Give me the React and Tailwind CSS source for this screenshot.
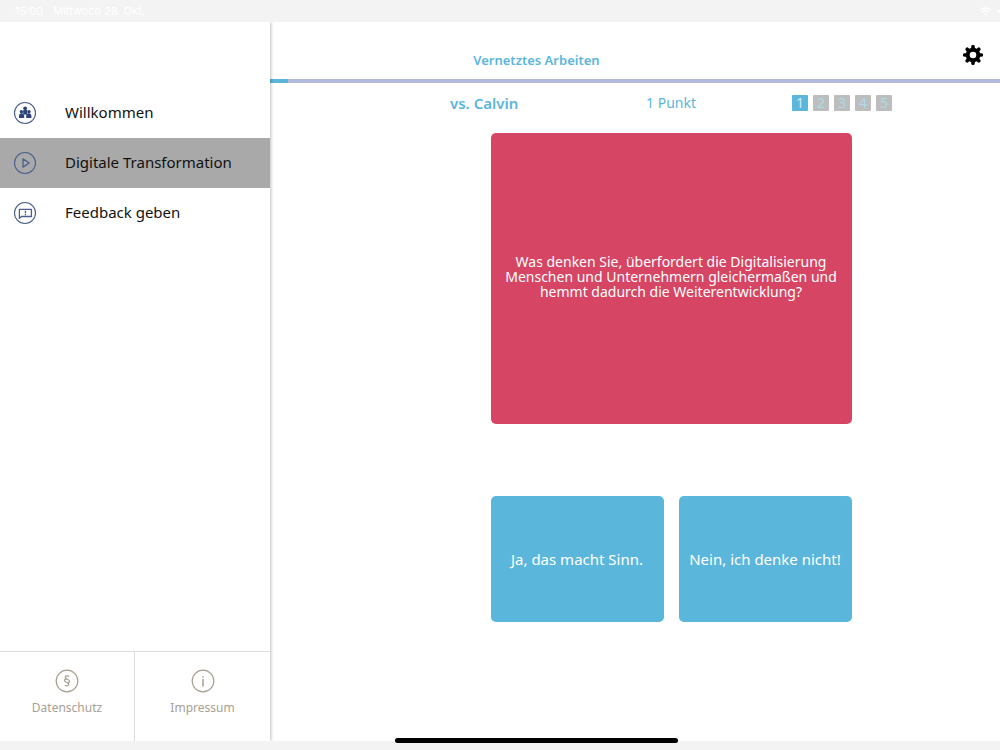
import { clsx } from 'clsx';

const WelcomeIcon = () => (
  <svg viewBox="0 0 24 24" className="h-6 w-6" fill="#2c4478" aria-hidden="true">
    <circle cx="12" cy="12" r="10.5" fill="none" stroke="#4a5f8e" strokeWidth="1.1" />
    <circle cx="12.200" cy="7.300" r="1.9" />
    <circle cx="8.400" cy="10.700" r="1.7" />
    <circle cx="16" cy="10.700" r="1.7" />
    <path d="M10.200 9h4v4.600h-4z" />
    <path d="M6 17v-2.200c0-3.400 5.200-3.400 5.200 0V17zM13.200 17v-2.200c0-3.400 5.200-3.400 5.200 0V17z" />
  </svg>
);

const PlayIcon = () => (
  <svg viewBox="0 0 24 24" className="h-6 w-6" fill="none" stroke="#4a5f8e" strokeWidth="1.1" aria-hidden="true">
    <circle cx="12" cy="12" r="10.5" />
    <path d="M10 7.900v8.200l6.200-4.100z" strokeWidth="1.300" strokeLinejoin="round" />
  </svg>
);

const FeedbackIcon = () => (
  <svg viewBox="0 0 24 24" className="h-6 w-6" fill="none" stroke="#4a5f8e" strokeWidth="1.1" aria-hidden="true">
    <circle cx="12" cy="12" r="10.5" />
    <path d="M6.400 8.300h12v7.200H8.600l-2.200 1.800z" strokeWidth="1.300" strokeLinejoin="round" />
    <path d="M12.400 9.700v2.600M12.400 13.100v1.100" strokeWidth="1.300" />
  </svg>
);

const InfoIcon = () => (
  <svg viewBox="0 0 24 24" className="h-6 w-6" fill="none" stroke="#a89f92" strokeWidth="1.2" aria-hidden="true">
    <circle cx="12" cy="12" r="10.8" />
    <path d="M12 10v7.500M12 7v1.500" strokeWidth="1.500" />
  </svg>
);

const PrivacyIcon = () => (
  <svg viewBox="0 0 24 24" className="h-6 w-6" fill="none" stroke="#a89f92" strokeWidth="1.2" aria-hidden="true">
    <circle cx="12" cy="12" r="10.8" />
    <path d="M14.200 7.500c-1.200-.9-4-.8-4 .8 0 1.800 4.300 2 4.300 3.900 0 1.200-1.200 1.700-2.300 1.700" />
    <path d="M12 9.800c-1.200 0-2.500.5-2.500 1.700 0 1.900 4.400 2.100 4.400 3.900 0 1.700-2.800 1.700-4.100.8" />
  </svg>
);

const GearIcon = () => (
  <svg viewBox="0 0 20 20" className="h-5 w-5" fill="none" stroke="#000" aria-hidden="true">
    <circle cx="10" cy="10" r="5.300" strokeWidth="4" />
    <path
      d="M10 1.700v2.500M10 15.800v2.500M1.700 10h2.500M15.800 10h2.500M4.200 4.200l1.600 1.600M14.200 14.200l1.600 1.600M4.200 15.800l1.600-1.600M14.200 5.800l1.600-1.600"
      strokeWidth="3.600"
      strokeLinecap="round"
    />
  </svg>
);

const menuItems = [
  { label: 'Willkommen', icon: WelcomeIcon },
  { label: 'Digitale Transformation', icon: PlayIcon, active: true },
  { label: 'Feedback geben', icon: FeedbackIcon },
];

const footerItems = [
  { label: 'Datenschutz', icon: PrivacyIcon },
  { label: 'Impressum', icon: InfoIcon },
];

const answers = ['Ja, das macht Sinn.', 'Nein, ich denke nicht!'];

const StatusBar = () => (
  <div className="flex h-[22px] items-center justify-between overflow-hidden bg-[#f3f3f3] pl-[15px] font-['Inter',sans-serif] text-[11px] text-white">
    <div className="flex gap-[10px]">
      <span>15:00</span>
      <span>Mittwoch 28. Okt.</span>
    </div>
    <div className="flex items-center gap-1">
      <svg viewBox="0 0 14 10" className="h-[9px] w-[13px]" fill="none" stroke="#fff" strokeWidth="1.7" aria-hidden="true">
        <path d="M.8 3.400c3.500-3.200 8.900-3.200 12.400 0M3 5.700c2.300-2 5.700-2 8 0" />
        <path d="M5 7.600c1.200-.9 2.800-.9 4 0L7 9.600z" fill="#fff" stroke="none" />
      </svg>
      <svg viewBox="0 0 4 8" className="h-2 w-1" fill="#fff" aria-hidden="true">
        <path d="M0 4.500 4 2.500v3z" />
      </svg>
    </div>
  </div>
);

const Sidebar = () => (
  <aside className="z-10 flex w-[27%] flex-col bg-white shadow-[1px_0_3px_rgba(0,0,0,0.25)]">
    <nav className="pt-[66px]">
      <ul>
        {menuItems.map((item) => (
          <li key={item.label}>
            <a
              href="#"
              className={clsx('flex h-[50px] items-center gap-7 pl-[13px] text-[15px] text-[#111]', item.active && 'bg-[#a9a9a9]')}
            >
              <item.icon />
              <span className="pb-0.5">{item.label}</span>
            </a>
          </li>
        ))}
      </ul>
    </nav>
    <div className="mt-auto grid grid-cols-2 divide-x divide-[#dcdcdc] border-t border-[#dcdcdc]">
      {footerItems.map((item) => (
        <a key={item.label} href="#" className="flex h-[89px] flex-col items-center gap-[5px] pt-[17px] text-[12px] leading-[20px] text-[#a89f92]">
          <item.icon />
          {item.label}
        </a>
      ))}
    </div>
  </aside>
);

const Quiz = () => (
  <main className="flex flex-1 flex-col bg-white">
    <header className="flex h-[57px] items-center pt-5">
      <h1 className="w-[73%] text-center text-[13px] font-semibold text-[#5bb6dc]">Vernetztes Arbeiten</h1>
      <button type="button" aria-label="Einstellungen" className="mr-[17px] mb-[11px] ml-auto">
        <GearIcon />
      </button>
    </header>
    <div className="h-1 bg-[#b3b9dd]">
      <div className="h-full w-[2.5%] bg-[#5bb6dc]" />
    </div>

    <div className="flex flex-col items-center pt-2 pl-[72px]">
      <div className="grid w-full max-w-[442px] grid-cols-3 items-center leading-6 text-[#5bb6dc]">
        <p className="text-[15px] font-semibold">vs. Calvin</p>
        <p className="text-center text-[14px]">1 Punkt</p>
        <ol className="flex justify-end gap-[5px]">
          {[1, 2, 3, 4, 5].map((round) => (
            <li
              key={round}
              className={clsx(
                'flex h-4 w-4 items-center justify-center rounded-[1px] text-[14px]',
                round === 1 ? 'bg-[#5bb6dc] text-[#cceaf5]' : 'bg-[#bdbdbd] text-[#a9dbea]'
              )}
            >
              {round}
            </li>
          ))}
        </ol>
      </div>

      <section className="mt-[18px] w-full max-w-[361px]">
        <div className="flex min-h-[291px] items-center justify-center rounded-[5px] bg-[#d64563] px-2 pb-1 text-center text-[14px] leading-[15px] text-white">
          <p>
            Was denken Sie, überfordert die Digitalisierung Menschen und Unternehmern gleichermaßen und hemmt dadurch die Weiterentwicklung?
          </p>
        </div>
        <div className="mt-[72px] grid grid-cols-2 gap-[15px]">
          {answers.map((answer) => (
            <button key={answer} type="button" className="min-h-[126px] rounded-[5px] bg-[#5bb6dc] px-1 text-[15px] text-white">
              {answer}
            </button>
          ))}
        </div>
      </section>
    </div>
  </main>
);

const App = () => {
  return (
    <div className="relative flex min-h-screen flex-col bg-[#f3f3f3] font-['Noto_Sans',sans-serif]">
      <StatusBar />
      <div className="flex flex-1 overflow-hidden">
        <Sidebar />
        <Quiz />
      </div>
      <div className="h-[9px]" />
      <div className="absolute bottom-[7px] left-[39.5%] h-[5px] w-[28.3%] rounded-full bg-black" />
    </div>
  );
};

export default App;
